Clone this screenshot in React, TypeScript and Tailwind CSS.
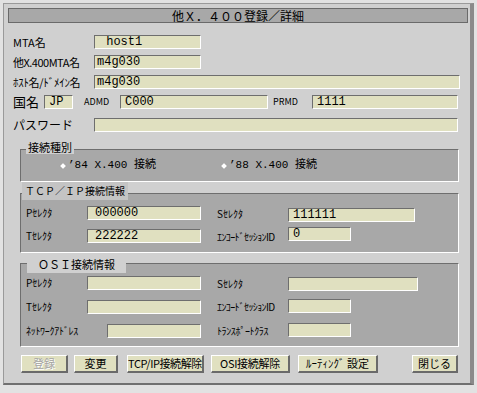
import type { ReactNode } from 'react';

const sans = "font-['Noto_Sans_CJK_JP',sans-serif]";
const mono = "font-['Liberation_Mono','Noto_Sans_CJK_JP',monospace]";

function Field({ className = '', value = '', pad = 'pl-[4px]' }: { className?: string; value?: string; pad?: string }) {
  return (
    <div
      className={`h-[14px] shrink-0 bg-[#e0e0c0] border border-[#6e6e6e] border-r-white border-b-white ${pad} ${mono} text-[12px] leading-[12px] text-black whitespace-pre overflow-hidden ${className}`}
    >
      {value}
    </div>
  );
}

function Label({ className = '', children }: { className?: string; children: ReactNode }) {
  return (
    <div className={`shrink-0 whitespace-nowrap text-black leading-[14px] ${sans} ${className}`}>{children}</div>
  );
}

function Group({
  className,
  legend,
  legendClass,
  children,
}: {
  className: string;
  legend: string;
  legendClass: string;
  children: ReactNode;
}) {
  return (
    <div className={`relative ml-[16px] w-[439px] bg-[#a8a8a8] border border-[#6e6e6e] border-r-white border-b-white ${className}`}>
      <span className={`absolute whitespace-nowrap text-black ${sans} ${legendClass}`}>{legend}</span>
      {children}
    </div>
  );
}

function Btn({ className, children, disabled }: { className: string; children: ReactNode; disabled?: boolean }) {
  return (
    <button
      type="button"
      className={`h-[18px] shrink-0 flex items-center justify-center bg-[#e0e0c0] border border-white border-r-2 border-b-2 border-r-[#6a6a6a] border-b-[#6a6a6a] text-[11px] leading-none whitespace-nowrap ${sans} ${
        disabled ? 'text-[#a4a4a4] [text-shadow:1px_1px_0_#ffffff]' : 'text-black'
      } ${className}`}
    >
      {children}
    </button>
  );
}

// radio marker: small light diamond
function Diamond() {
  return (
    <svg width="8" height="8" viewBox="0 0 8 8" className="shrink-0">
      <polygon points="4,0.5 7.5,4 4,7.5 0.5,4" fill="#ffffff" stroke="#9a9a9a" strokeWidth="1" />
    </svg>
  );
}

export default function App() {
  return (
    <div className="w-[477px] h-[393px] bg-[#e2e2e2] pt-[3px] pl-[3px] overflow-hidden">
      <div className="w-[471px] h-[382px] bg-[#d0d0d0] border-t border-l border-[#9a9a9a] border-r-[4px] border-r-[#8a8a8a] border-b-2 border-b-[#707070] pt-[4px] flex flex-col">
        {/* Title */}
        <div className={`ml-[4px] w-[460px] h-[15px] bg-[#a8a8a8] border border-[#6a6a6a] flex items-center justify-center text-[12px] leading-none text-black ${sans}`}>
          他Ｘ．４００登録／詳細
        </div>

        {/* Top fields */}
        <div className="pl-[9px] flex flex-col">
          <div className="mt-[12px] flex items-center h-[14px]">
            <Label className="w-[81px] text-[11px]">MTA名</Label>
            <Field className="w-[107px]" value=" host1" />
          </div>
          <div className="mt-[6px] flex items-center h-[14px]">
            <Label className="w-[81px] text-[11px] tracking-[-0.5px]">他X.400MTA名</Label>
            <Field className="w-[107px]" pad="pl-[2px]" value="m4g030" />
          </div>
          <div className="mt-[6px] flex items-center h-[14px]">
            <Label className="w-[81px] text-[11px] tracking-[-0.3px]">ﾎｽﾄ名/ﾄﾞﾒｲﾝ名</Label>
            <Field className="w-[366px]" pad="pl-[2px]" value="m4g030" />
          </div>
          <div className="mt-[6px] flex items-center h-[14px]">
            <Label className="w-[31px] text-[13px]">国名</Label>
            <Field className="w-[29px]" value="JP" />
            <Label className="ml-[11px] w-[36px] text-[9px]">ADMD</Label>
            <Field className="w-[148px]" value="C000" />
            <Label className="ml-[5px] w-[39px] text-[9px]">PRMD</Label>
            <Field className="w-[146px]" value="1111" />
          </div>
          <div className="mt-[9px] flex items-center h-[14px]">
            <Label className="w-[81px] text-[12px]">パスワード</Label>
            <Field className="w-[364px]" />
          </div>
        </div>

        {/* 接続種別 */}
        <Group className="mt-[17px] h-[33px]" legend="接続種別" legendClass="-top-[10px] left-[5px] px-[2px] bg-[#d0d0d0] text-[11px] leading-[14px]">
          <div className={`h-full flex items-center pl-[38px] text-[11px] text-black ${mono}`}>
            <div className="w-[161px] flex items-center gap-[1px]">
              <Diamond />
              <span className="whitespace-pre">’84 X.400 接続</span>
            </div>
            <div className="flex items-center gap-[1px]">
              <Diamond />
              <span className="whitespace-pre">’88 X.400 接続</span>
            </div>
          </div>
        </Group>

        {/* TCP/IP */}
        <Group
          className="mt-[11px] h-[60px]"
          legend="ＴＣＰ／ＩＰ接続情報"
          legendClass="-top-[12px] left-[1px] h-[18px] px-[3px] bg-[#c4c4c4] text-[10px] leading-[18px]"
        >
          <div className="pt-[12px] pl-[5px] flex flex-col gap-[9px]">
            <div className="flex items-start h-[14px]">
              <Label className="w-[61px] text-[10px]">Pｾﾚｸﾀ</Label>
              <Field className="w-[114px]" pad="pl-[7px]" value="000000" />
              <Label className="ml-[16px] w-[71px] text-[10px] mt-[1px]">Sｾﾚｸﾀ</Label>
              <Field className="w-[127px] mt-[2px]" value="111111" />
            </div>
            <div className="flex items-start h-[14px]">
              <Label className="w-[61px] text-[10px]">Tｾﾚｸﾀ</Label>
              <Field className="w-[114px]" pad="pl-[7px]" value="222222" />
              <Label className="ml-[16px] w-[71px] text-[10px] tracking-[-0.6px] mt-[1px]">ｴﾝｺｰﾄﾞｾｯｼｮﾝID</Label>
              <Field className="w-[63px] -mt-[2px]" value="0" />
            </div>
          </div>
        </Group>

        {/* OSI */}
        <Group
          className="mt-[10px] h-[84px]"
          legend="ＯＳＩ接続情報"
          legendClass="-top-[8px] left-[6px] h-[17px] px-[11px] bg-[#d0d0d0] text-[11px] leading-[17px]"
        >
          <div className="pt-[12px] pl-[5px] flex flex-col gap-[10px]">
            <div className="flex items-start h-[14px]">
              <Label className="w-[61px] text-[10px]">Pｾﾚｸﾀ</Label>
              <Field className="w-[114px]" />
              <Label className="ml-[16px] w-[71px] text-[10px] mt-[1px]">Sｾﾚｸﾀ</Label>
              <Field className="w-[130px] mt-[1px]" />
            </div>
            <div className="flex items-start h-[14px]">
              <Label className="w-[61px] text-[10px]">Tｾﾚｸﾀ</Label>
              <Field className="w-[114px]" />
              <Label className="ml-[16px] w-[71px] text-[10px] tracking-[-0.6px]">ｴﾝｺｰﾄﾞｾｯｼｮﾝID</Label>
              <Field className="w-[63px] -mt-[1px]" />
            </div>
            <div className="flex items-start h-[14px]">
              <Label className="w-[81px] text-[10px] tracking-[-0.3px]">ﾈｯﾄﾜｰｸｱﾄﾞﾚｽ</Label>
              <Field className="w-[94px]" />
              <Label className="ml-[16px] w-[71px] text-[10px] tracking-[-0.4px]">ﾄﾗﾝｽﾎﾟｰﾄｸﾗｽ</Label>
              <Field className="w-[63px] -mt-[1px]" />
            </div>
          </div>
        </Group>

        {/* Buttons */}
        <div className="mt-[8px] pl-[17px] flex items-center">
          <Btn className="w-[47px]" disabled>
            登録
          </Btn>
          <Btn className="ml-[6px] w-[44px]">変更</Btn>
          <Btn className="ml-[9px] w-[77px] tracking-[-0.4px]">TCP/IP接続解除</Btn>
          <Btn className="ml-[7px] w-[79px] tracking-[-0.3px]">OSI接続解除</Btn>
          <Btn className="ml-[8px] w-[80px]">ﾙｰﾃｨﾝｸﾞ 設定</Btn>
          <Btn className="ml-[34px] w-[46px]">閉じる</Btn>
        </div>
      </div>
    </div>
  );
}
